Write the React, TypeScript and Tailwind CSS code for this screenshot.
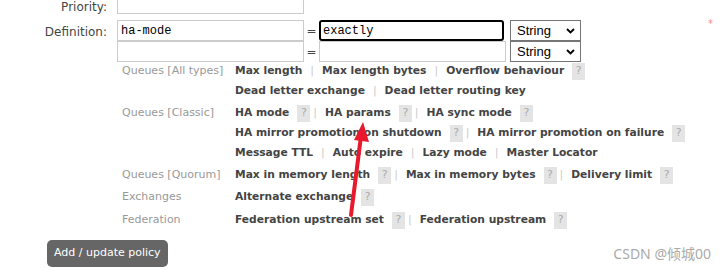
import React from "react"

type Item = { name: string; help?: boolean }

const grupos: { label: string; rows: Item[][] }[] = [
  {
    label: "Queues [All types]",
    rows: [
      [{ name: "Max length" }, { name: "Max length bytes" }, { name: "Overflow behaviour", help: true }],
      [{ name: "Dead letter exchange" }, { name: "Dead letter routing key" }],
    ],
  },
  {
    label: "Queues [Classic]",
    rows: [
      [
        { name: "HA mode", help: true },
        { name: "HA params", help: true },
        { name: "HA sync mode", help: true },
      ],
      [
        { name: "HA mirror promotion on shutdown", help: true },
        { name: "HA mirror promotion on failure", help: true },
      ],
      [{ name: "Message TTL" }, { name: "Auto expire" }, { name: "Lazy mode" }, { name: "Master Locator" }],
    ],
  },
  {
    label: "Queues [Quorum]",
    rows: [
      [
        { name: "Max in memory length", help: true },
        { name: "Max in memory bytes", help: true },
        { name: "Delivery limit", help: true },
      ],
    ],
  },
  { label: "Exchanges", rows: [[{ name: "Alternate exchange", help: true }]] },
  {
    label: "Federation",
    rows: [[{ name: "Federation upstream set", help: true }, { name: "Federation upstream", help: true }]],
  },
]

const Help = () => (
  <span className="ml-2 flex h-[17px] w-[13px] items-center justify-center bg-[#e4e4e4] text-[11px] font-normal text-[#aaa]">
    ?
  </span>
)

const SelectBox = () => (
  <div className="flex h-[21px] w-[71px] items-center justify-between border border-[#767676] bg-white pl-[6px] pr-[5px] font-['Liberation_Sans',Arial,sans-serif] text-[13px] text-black">
    <span>String</span>
    <svg width="9" height="6" viewBox="0 0 9 6">
      <path d="M1 1l3.5 3.5L8 1" fill="none" stroke="#000" strokeWidth="1.8" />
    </svg>
  </div>
)

export default function App() {
  return (
    <div className="relative h-[270px] w-[726px] overflow-hidden bg-white font-['DejaVu_Sans',Verdana,sans-serif] text-[11px]">
      {/* formulario */}
      <div className="-mt-[8px] flex items-start">
        <div className="w-[107px] pt-[8px] text-right text-[12px] leading-[14px] text-[#444]">Priority:</div>
        <div className="ml-[10px] h-[22px] w-[187px] border border-[#ccc]" />
      </div>

      <div className="mt-[6px] flex items-start">
        <div className="w-[107px] pt-[5px] text-right text-[12px] leading-[14px] text-[#444]">Definition:</div>
        <div className="ml-[10px] flex flex-col">
          <div className="flex items-center">
            <div className="flex h-[21px] w-[187px] items-center border border-[#ccc] px-[3px] font-['Liberation_Mono',monospace] text-[12px] text-black">
              ha-mode
            </div>
            <span className="w-[15px] text-center text-[12px] text-[#444]">=</span>
            <div className="flex h-[21px] w-[185px] items-center rounded-[3px] border-2 border-black px-[2px] font-['Liberation_Mono',monospace] text-[12px] text-black">
              exactly
            </div>
            <div className="ml-[6px]">
              <SelectBox />
            </div>
          </div>
          <div className="flex items-center">
            <div className="h-[21px] w-[187px] border border-[#ccc]" />
            <span className="w-[15px] text-center text-[12px] text-[#444]">=</span>
            <div className="h-[21px] w-[187px] border border-[#ccc]" />
            <div className="ml-[4px]">
              <SelectBox />
            </div>
          </div>
        </div>
        <span className="ml-auto mr-[13px] mt-[-4px] text-[10px] text-[#f88]">*</span>
      </div>

      {/* argumentos */}
      <div className="ml-[122px] mt-[-2px] flex flex-col">
        {grupos.map((g, gi) => (
          <div key={g.label} className={`flex ${gi > 2 ? "py-[1.5px]" : "py-[1px]"}`}>
            <div className="flex h-[20px] w-[113px] items-center text-[#999]">{g.label}</div>
            <div className="flex flex-col">
              {g.rows.map((row, ri) => (
                <div key={ri} className="flex h-[20px] items-center text-[10.7px] font-bold text-[#444]">
                  {row.map((it, i) => (
                    <React.Fragment key={it.name}>
                      {i > 0 && (
                        <span
                          className={`${row[i - 1].help ? "ml-[3px]" : "ml-[8px]"} mr-[8px] text-[11px] font-normal text-[#ccc]`}
                        >
                          |
                        </span>
                      )}
                      <span>{it.name}</span>
                      {it.help && <Help />}
                    </React.Fragment>
                  ))}
                </div>
              ))}
            </div>
          </div>
        ))}
      </div>

      <div className="mt-[8px] flex items-center justify-between pl-[47px] pr-[15px]">
        <button className="h-[27px] rounded-[5px] bg-[#666] px-[7px] text-[11px] text-white">
          Add / update policy
        </button>
        <span className="font-['Noto_Sans','Noto_Sans_CJK_SC',sans-serif] text-[14px] text-[#aaa]">
          CSDN @倾城00
        </span>
      </div>

      {/* flecha roja */}
      <svg className="pointer-events-none absolute left-0 top-0" width="726" height="270">
        <line x1="351" y1="215" x2="361" y2="136" stroke="#e8192c" strokeWidth="4" strokeLinecap="round" />
        <polygon points="363,122 354,140 369,142" fill="#e8192c" />
      </svg>
    </div>
  )
}
